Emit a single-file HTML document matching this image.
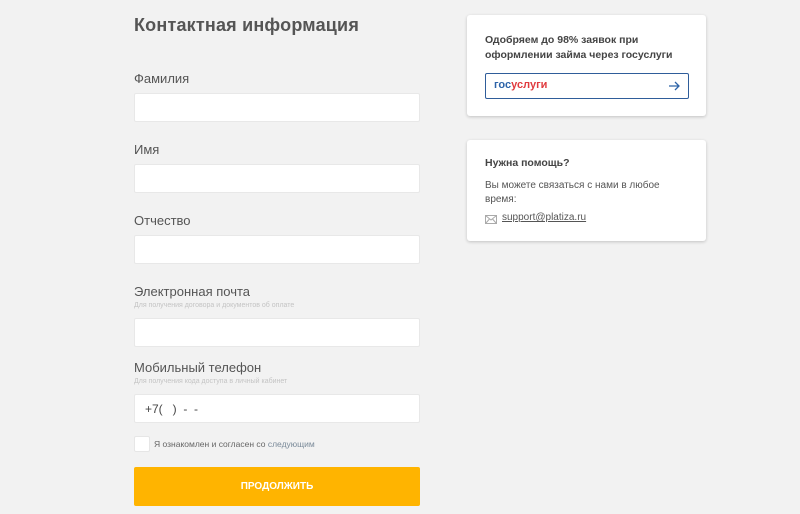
<!DOCTYPE html>
<html><head><meta charset="utf-8"><style>
*{margin:0;padding:0;box-sizing:border-box}
body{width:800px;height:514px;background:#f2f2f2;font-family:"Liberation Sans",sans-serif;position:relative;overflow:hidden;color:#444}
.a{position:absolute}
h1{position:absolute;left:134px;top:15px;font-size:18px;font-weight:bold;color:#555;letter-spacing:0.2px}
.l{position:absolute;left:134px;font-size:13px;color:#555}
.h{position:absolute;left:134px;font-size:7px;color:#c4c4c4}
.i{position:absolute;left:134px;width:286px;height:29px;background:#fff;border:1px solid #e8e8e8;border-radius:2px}
.card{position:absolute;left:467px;width:239px;height:101px;background:#fff;border-radius:3px;box-shadow:0 1px 3px rgba(0,0,0,.2)}
</style></head><body>
<h1>Контактная информация</h1>
<div class="l" style="top:71px">Фамилия</div>
<div class="i" style="top:93px"></div>
<div class="l" style="top:142px">Имя</div>
<div class="i" style="top:164px"></div>
<div class="l" style="top:213px">Отчество</div>
<div class="i" style="top:235px"></div>
<div class="l" style="top:284px">Электронная почта</div>
<div class="h" style="top:302px">Для получения договора и документов об оплате</div>
<div class="i" style="top:318px"></div>
<div class="l" style="top:360px">Мобильный телефон</div>
<div class="h" style="top:378px">Для получения кода доступа в личный кабинет</div>
<div class="i" style="top:394px"><span style="position:absolute;left:10px;top:7px;font-size:12px;color:#444">+7(&nbsp;&nbsp;&nbsp;)&nbsp;&nbsp;-&nbsp;&nbsp;-</span></div>
<div class="a" style="left:134px;top:436px;width:16px;height:16px;background:#fff;border:1px solid #e6e6e6;border-radius:2px"></div>
<div class="a" style="left:154px;top:439px;font-size:8.5px;color:#666">Я ознакомлен и согласен со <span style="color:#7a8a99">следующим</span></div>
<div class="a" style="left:134px;top:467px;width:286px;height:39px;background:#ffb400;border-radius:2px;color:#fff;font-weight:bold;font-size:10px;text-align:center;line-height:39px">ПРОДОЛЖИТЬ</div>

<div class="card" style="top:15px">
<div class="a" style="left:18px;top:18px;font-size:10.5px;font-weight:bold;color:#444;line-height:15px">Одобряем до 98% заявок при<br>оформлении займа через госуслуги</div>
<div class="a" style="left:18px;top:58px;width:204px;height:26px;border:1.5px solid #2f5d9a;border-radius:2px">
<span style="position:absolute;left:8px;top:5px;font-size:11px;font-weight:bold;color:#2d63a8">гос<span style="color:#e03a3e">услуги</span></span>
<svg class="a" style="right:8px;top:7px" width="12" height="10" viewBox="0 0 12 10"><path d="M1 5H11M7 1L11 5L7 9" stroke="#2d63a8" stroke-width="1.3" fill="none"/></svg>
</div></div>

<div class="card" style="top:140px">
<div class="a" style="left:18px;top:17px;font-size:10.5px;font-weight:bold;color:#444">Нужна помощь?</div>
<div class="a" style="left:18px;top:39px;font-size:10px;color:#555;line-height:13.5px">Вы можете связаться с нами в любое<br>время:</div>
<svg class="a" style="left:18px;top:75px" width="12" height="9" viewBox="0 0 12 9"><rect x=".5" y=".5" width="11" height="8" fill="none" stroke="#aaa"/><path d="M.5 .5L6 5L11.5 .5M.5 8.5L4.5 4M11.5 8.5L7.5 4" stroke="#aaa" fill="none"/></svg>
<div class="a" style="left:35px;top:72px;font-size:10px;color:#555;text-decoration:underline">support@platiza.ru</div>
</div>
</body></html>
